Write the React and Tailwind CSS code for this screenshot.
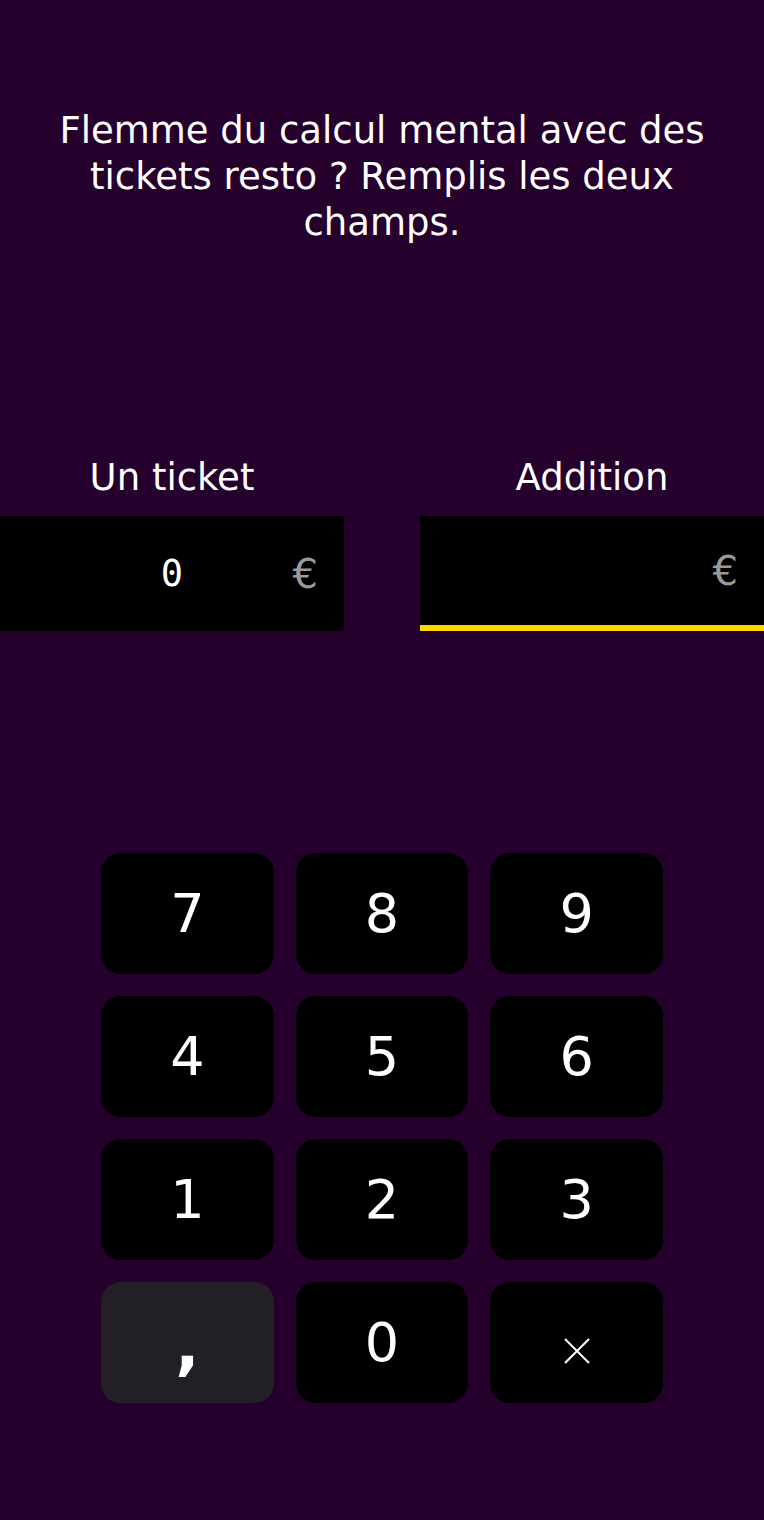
const keys = ['7', '8', '9', '4', '5', '6', '1', '2', '3'];

const Key = ({ children, bg = 'bg-black', className = '' }) => (
  <button className={`h-[121px] rounded-[20px] ${bg} text-white text-[54px] flex items-center justify-center ${className}`}>
    {children}
  </button>
);

const Field = ({ label, value, active }) => (
  <div className="flex flex-col w-[344px]">
    <div className="h-[76px] flex items-center justify-center text-[37px] text-white">{label}</div>
    <div className={`relative h-[115px] bg-black flex items-center justify-center ${active ? 'border-b-[6px] border-[#ffd500]' : ''}`}>
      <span className="text-white text-[37px] font-['DejaVu_Sans_Mono',monospace]">{value}</span>
      <span className="absolute right-[26px] top-1/2 -translate-y-1/2 text-[#9a9a9a] text-[40px]">€</span>
    </div>
  </div>
);

export default function App() {
  return (
    <div className="min-h-[1520px] bg-[#26002c] font-['DejaVu_Sans',Verdana,sans-serif] flex flex-col">
      <p className="pt-[108px] px-[30px] text-center text-white text-[37px] leading-[46px]">
        Flemme du calcul mental avec des tickets resto ? Remplis les deux champs.
      </p>

      <div className="mt-[194px] flex justify-between">
        <Field label="Un ticket" value="0" />
        <Field label="Addition" value="" active />
      </div>

      <div className="mt-[222px] mx-auto w-[562px] grid grid-cols-3 gap-x-[22px] gap-y-[22px]">
        {keys.map((k) => (
          <Key key={k}>{k}</Key>
        ))}
        <Key bg="bg-[#222026]" className="font-bold text-[64px] pt-[6px]">,</Key>
        <Key>0</Key>
        <Key>
          <svg width="28" height="28" viewBox="0 0 28 28" className="mt-[16px]" stroke="white" strokeWidth="2" fill="none">
            <path d="M2 2 L26 26 M26 2 L2 26" />
          </svg>
        </Key>
      </div>
    </div>
  );
}
